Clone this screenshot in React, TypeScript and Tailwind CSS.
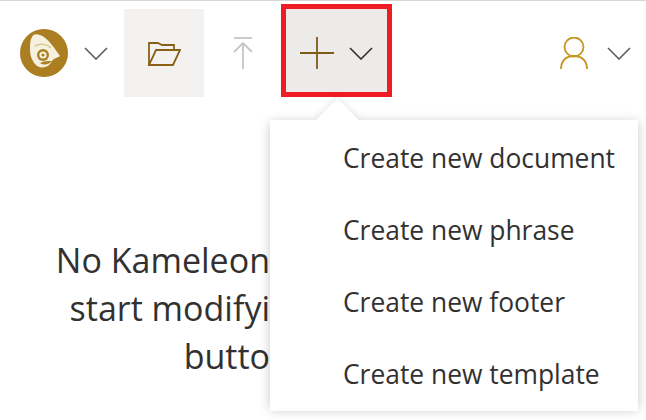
import React from 'react';

const Chevron = ({ className }: { className: string }) => (
  <svg width="24" height="13" viewBox="0 0 24 13" fill="none" className={className}>
    <path d="M1 1 L12 12 L23 1" stroke="currentColor" strokeWidth="1.6" />
  </svg>
);

const KameleonLogo = () => (
  <svg width="48" height="48" viewBox="0 0 48 48">
    <circle cx="24" cy="24" r="24" fill="#ab7e22" />
    <path
      d="M12 8 C14 4 19 5 24 8 C30 12 35 20 40 27 C37 29 34 29 32 32 C28 40 19 40 15 35 C12 31 10 27 10 20 C10 15 10 11 12 8 Z"
      fill="#f6f1df"
    />
    <path d="M15 17 C20 14 27 15 31 19" stroke="#d9c88f" strokeWidth="1.5" fill="none" />
    <circle cx="23" cy="26" r="6" fill="#ab7e22" />
    <circle cx="23" cy="26" r="3.6" fill="#f6f1df" />
    <circle cx="23" cy="26" r="1.6" fill="#ab7e22" />
    <path d="M20 34 C25 37 29 35 32 32 C28 32 24 32 20 34 Z" fill="#ab7e22" />
  </svg>
);

const menuItems = ['Create new document', 'Create new phrase', 'Create new footer', 'Create new template'];

export default function App() {
  return (
    <div className="relative h-[420px] w-[646px] overflow-hidden border-t border-[#d6d6d6] bg-white font-['Open_Sans',sans-serif] text-[#323130]">
      {/* Toolbar */}
      <div className="flex h-[97px] items-start">
        <div className="mt-2 flex h-[88px] w-[124px] items-center pl-5">
          <KameleonLogo />
          <Chevron className="ml-4 text-[#605e5c]" />
        </div>
        <button className="mt-2 flex h-[88px] w-20 items-center justify-center bg-[#f3f2f1]">
          <svg width="34" height="25" viewBox="0 0 34 25" fill="none" stroke="#8a6116" strokeWidth="1.8">
            <path d="M2 24 V2 H11 L15 4 H27 V9" />
            <path d="M2 24 H26 L33 9 H9 L2 24 Z" />
          </svg>
        </button>
        <div className="mt-2 flex h-[88px] w-[77px] items-center justify-center">
          <svg width="20" height="32" viewBox="0 0 20 32" fill="none" stroke="#c8c6c4" strokeWidth="1.8">
            <path d="M1 1 H19" />
            <path d="M10 32 V6" />
            <path d="M1 15 L10 6 L19 15" />
          </svg>
        </div>
        <button className="mt-[3px] flex h-[93px] w-[111px] items-center border-[5px] border-[#f01c24] bg-[#edebe9] pt-[5px] pl-[14px]">
          <svg width="34" height="32" viewBox="0 0 34 32" fill="none" stroke="#7f5c13" strokeWidth="1.8">
            <path d="M0 16 H34" />
            <path d="M17 0 V32" />
          </svg>
          <Chevron className="ml-[15px] text-[#323130]" />
        </button>
        <div className="mt-2 ml-auto flex h-[88px] items-center pr-[15px]">
          <svg width="28" height="32" viewBox="0 0 28 32" fill="none" stroke="#c4971f" strokeWidth="1.8">
            <circle cx="14" cy="10" r="9.5" />
            <path d="M1 32 C1 24 6 19 14 19 C22 19 27 24 27 32" />
          </svg>
          <Chevron className="ml-[19px] text-[#605e5c]" />
        </div>
      </div>

      {/* Empty state message, cut off by the menu */}
      <div className="mt-[138px] w-[270px] overflow-hidden text-right text-[34px] leading-[48px] whitespace-nowrap">
        <p>No Kameleon</p>
        <p>start modifyi</p>
        <p>butto</p>
      </div>

      {/* Create menu */}
      <div className="absolute top-[119px] left-[270px] h-[288px] w-[368px] rounded-sm bg-white shadow-[0_2px_12px_rgba(0,0,0,0.22)]">
        <div className="absolute -top-[15px] left-[52px] h-[31px] w-[31px] rotate-45 bg-white shadow-[-2px_-2px_6px_rgba(0,0,0,0.08)]" />
        <div className="relative flex flex-col bg-white pt-[3px]">
          {menuItems.map((item) => (
            <div key={item} className="flex h-[72px] items-center pl-[73px] text-[26.4px]">
              {item}
            </div>
          ))}
        </div>
      </div>
    </div>
  );
}
